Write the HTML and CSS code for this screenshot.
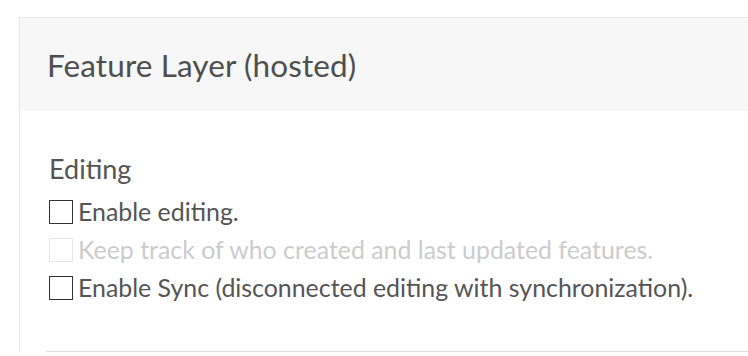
FILE: index.html
```html
<!DOCTYPE html>
<html>
<head>
<meta charset="utf-8">
<link rel="stylesheet" href="styles.css">
</head>
<body>
<div class="panel">
  <div class="panel-header">
    <h1 class="panel-title">Feature Layer (hosted)</h1>
  </div>
  <div class="panel-body">
    <h2 class="section-title">Editing</h2>
    <label class="check-row">
      <span class="box"></span>
      <span class="label">Enable editing.</span>
    </label>
    <label class="check-row disabled">
      <span class="box"></span>
      <span class="label">Keep track of who created and last updated features.</span>
    </label>
    <label class="check-row">
      <span class="box"></span>
      <span class="label">Enable Sync (disconnected editing with synchronization).</span>
    </label>
    <div class="divider"></div>
  </div>
</div>
</body>
</html>
```

FILE: styles.css
```css
html, body {
  margin: 0;
  padding: 0;
  background: #ffffff;
  overflow: hidden;
  height: 356px;
}
body {
  font-family: Lato, "Noto Sans", sans-serif;
  color: #555555;
  padding: 17px 0 0 19px;
  box-sizing: border-box;
}
.panel {
  border-top: 1px solid #e8e8e8;
  border-left: 1px solid #e8e8e8;
  width: 760px;
}
.panel-header {
  background: #f7f7f7;
  height: 93px;
  padding-left: 27px;
  display: flex;
  align-items: center;
}
.panel-title {
  margin: 0;
  font-weight: 400;
  font-size: 31.5px;
  color: #4f4f4f;
  letter-spacing: 0.1px;
}
.panel-body {
  padding: 42px 0 0 29px;
}
.section-title {
  margin: 0 0 8px 0;
  font-weight: 400;
  font-size: 27px;
  line-height: 32px;
  color: #555555;
}
.check-row {
  display: flex;
  align-items: center;
  height: 38px;
  gap: 5px;
  font-size: 24.9px;
}
.label {
  position: relative;
  top: -1px;
}
.box {
  width: 22px;
  height: 22px;
  border: 1.5px solid #333;
  box-sizing: content-box;
  flex: none;
}
.check-row.disabled {
  color: #cccccc;
}
.check-row.disabled .box {
  border-color: #e6e6e6;
}
.divider {
  margin: 44px 0 0 -3px;
  border-top: 1px solid #dcdcdc;
}
```
